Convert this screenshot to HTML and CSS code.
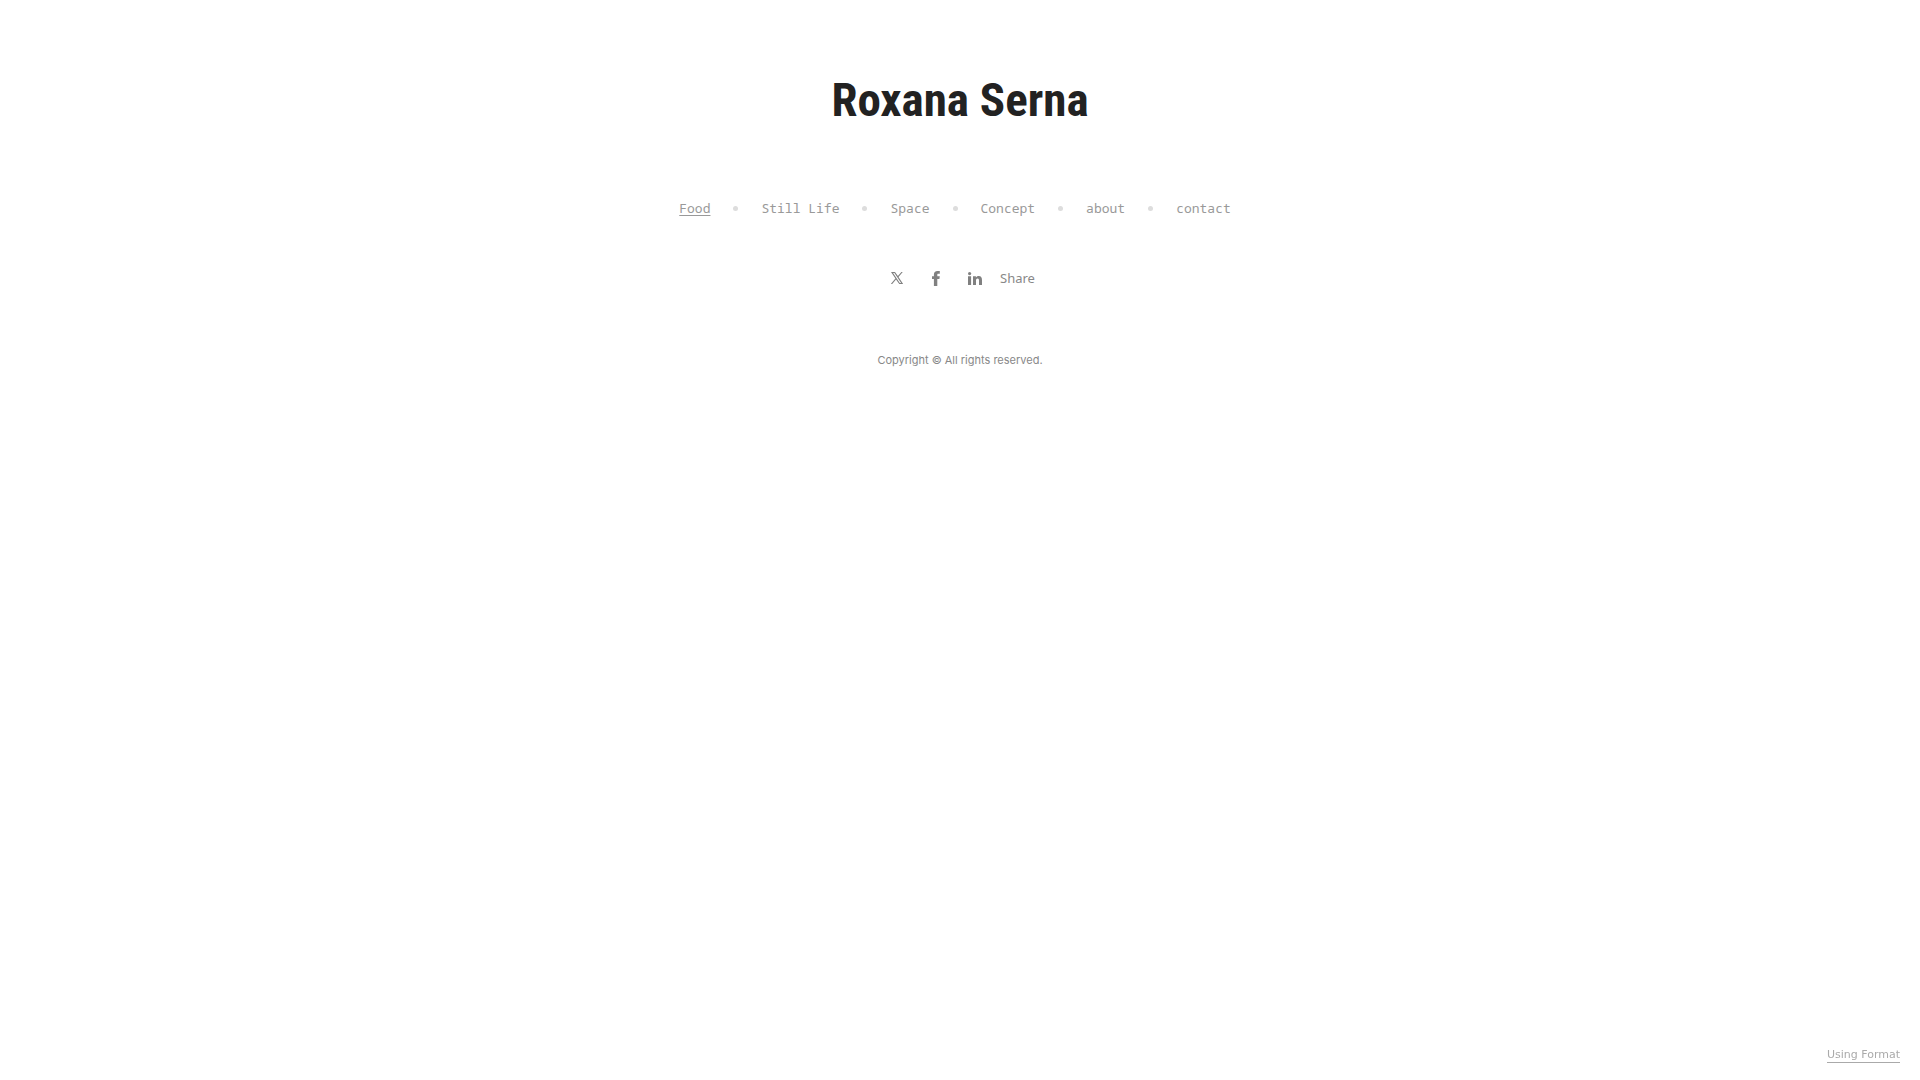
FILE: index.html
```html
<!DOCTYPE html>
<html lang="en">
<head>
  <meta charset="UTF-8" />
  <title>Roxana Serna</title>
  <meta name="viewport" content="width=device-width, initial-scale=1.0" />
  <link rel="stylesheet" href="styles.css">
</head>
<body>

  <header>
    <h1><a href="#">Roxana Serna</a></h1>

    <nav>
      <ul class="menu">
        <li><a class="active" href="#food">Food</a></li>
        <li><a href="#still-life">Still Life</a></li>
        <li><a href="#space">Space</a></li>
        <li><a href="#concept">Concept</a></li>
        <li><a href="#about">about</a></li>
        <li><a href="#contact">contact</a></li>
      </ul>
    </nav>
  </header>

  <div class="share">
    <a href="#x" aria-label="Share on X">
      <svg width="12" height="12" viewBox="0 0 24 24"><path fill-rule="evenodd" d="M0 0h8l5.800 8L20.800 0h2.700l-8.500 10L24.500 24h-8L10 15.100 2.400 24H-.5l9.300-10.900zM4.200 2 17.600 22h2.600L6.800 2z"/></svg>
    </a>
    <a href="#facebook" aria-label="Share on Facebook">
      <svg width="8" height="15" viewBox="0 0 8 15"><path d="M1.900 15V8H0V5.300h1.900V3.700C1.900 1.300 3.200 0 5.500 0H7.800v2.700H6.400C5.400 2.700 5.300 3.100 5.300 4v1.300h2.500L7.400 8H5.300v7z"/></svg>
    </a>
    <a href="#linkedin" aria-label="Share on LinkedIn">
      <svg width="14" height="13" viewBox="0 0 14 13"><circle cx="1.600" cy="1.600" r="1.600"/><path d="M0 4.300h3.100V13H0zM5 4.300h2.900v1.200C8.400 4.600 9.400 4 10.700 4 13.300 4 14 5.700 14 8.200V13h-3V8.700c0-1.200-.1-2.200-1.400-2.200S8 7.500 8 8.700V13H5z"/></svg>
    </a>
    <span>Share</span>
  </div>

  <footer>Copyright © All rights reserved.</footer>

  <a class="badge" href="#format">Using Format</a>

</body>
</html>
```

FILE: styles.css
```css
body {
  margin: 0;
  padding: 70px 20px;
  background-color: #fff;
  color: #888;
  text-align: center;
}

a {
  color: inherit;
  text-decoration: none;
}

h1 {
  margin: 0;
  font-family: "Roboto Condensed", Roboto, sans-serif;
  font-size: 47px;
  line-height: 60px;
  color: #222;
}

.menu {
  display: flex;
  flex-wrap: wrap;
  justify-content: center;
  margin: 68px 10px 0 0;
  padding: 0;
  list-style: none;
  font-family: "Noto Sans Mono", "Liberation Mono", monospace;
  font-size: 13px;
  line-height: 20px;
  color: #999;
}

.menu li {
  display: flex;
  align-items: center;
}

.menu li + li::before {
  content: "";
  width: 5px;
  height: 5px;
  margin: 0 23px;
  border-radius: 50%;
  background-color: #ddd;
}

.menu a:hover,
.menu .active {
  text-decoration: underline;
  text-underline-offset: 2px;
}

.share {
  display: flex;
  justify-content: center;
  align-items: center;
  margin: 48px 8px 0 0;
  font-family: "Noto Sans", sans-serif;
  font-size: 13px;
  line-height: 24px;
}

.share a {
  display: flex;
  justify-content: center;
  width: 39px;
}

.share svg {
  fill: #808080;
}

.share span {
  margin-left: 6px;
}

footer {
  margin-top: 60px;
  font-family: Inter, sans-serif;
  font-size: 11px;
  line-height: 20px;
}

.badge {
  position: fixed;
  right: 20px;
  bottom: 17px;
  border-bottom: 1px solid #aaa;
  font-family: "DejaVu Sans", sans-serif;
  font-size: 11px;
  line-height: 15px;
  color: #aaa;
}
```
